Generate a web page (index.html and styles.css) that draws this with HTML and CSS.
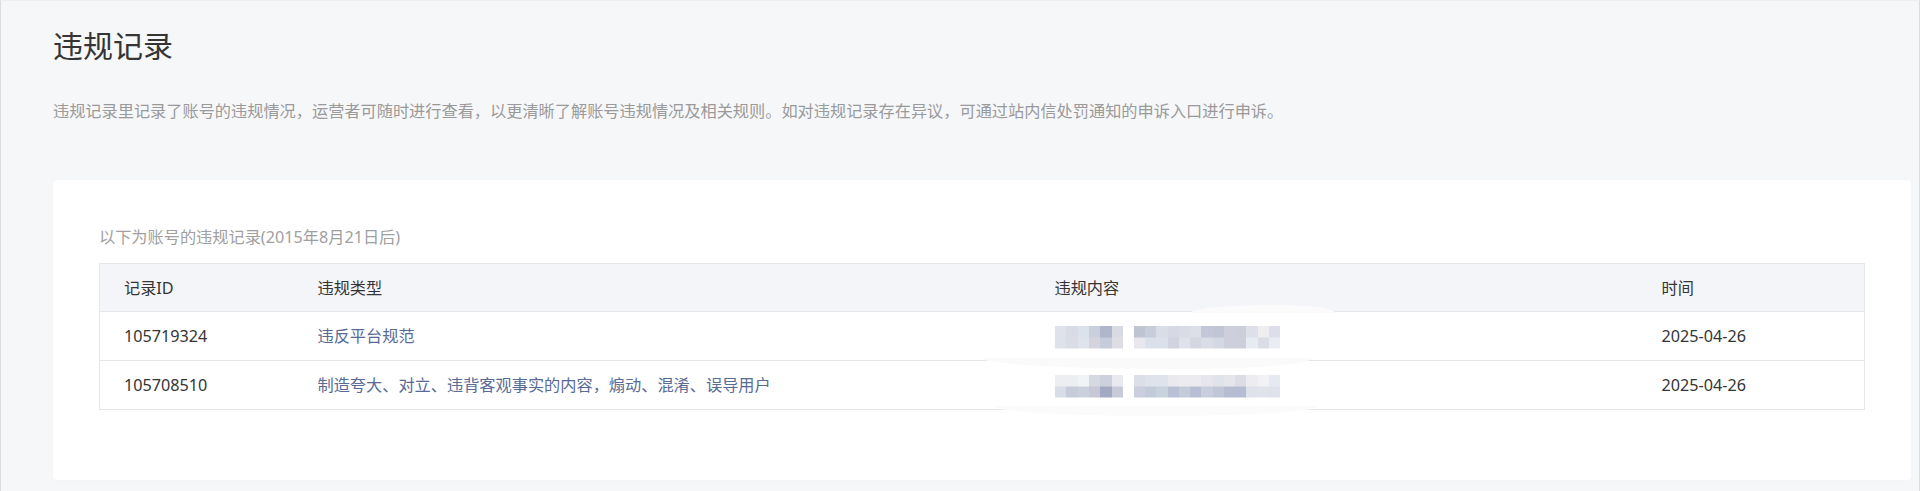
FILE: index.html
```html
<!DOCTYPE html>
<html lang="zh-CN">
<head>
<meta charset="utf-8">
<title>违规记录</title>
<link rel="stylesheet" href="styles.css">
</head>
<body>
<div class="page">
  <h1 class="title">违规记录</h1>
  <p class="desc">违规记录里记录了账号的违规情况，运营者可随时进行查看，以更清晰了解账号违规情况及相关规则。如对违规记录存在异议，可通过站内信处罚通知的申诉入口进行申诉。</p>
  <section class="card">
    <p class="subtitle">以下为账号的违规记录(2015年8月21日后)</p>
    <div class="table-wrap">
      <table class="records">
        <colgroup>
          <col class="c-id">
          <col class="c-type">
          <col class="c-content">
          <col class="c-time">
        </colgroup>
        <thead>
          <tr><th>记录ID</th><th>违规类型</th><th>违规内容</th><th>时间</th></tr>
        </thead>
        <tbody>
          <tr>
            <td>105719324</td>
            <td class="link">违反平台规范</td>
            <td><div class="mosaic"><span class="blk a1"></span><span class="blk b1"></span></div></td>
            <td>2025-04-26</td>
          </tr>
          <tr>
            <td>105708510</td>
            <td class="link">制造夸大、对立、违背客观事实的内容，煽动、混淆、误导用户</td>
            <td><div class="mosaic"><span class="blk a2"></span><span class="blk b2"></span></div></td>
            <td>2025-04-26</td>
          </tr>
        </tbody>
      </table>
      <span class="smear s1"></span>
      <span class="smear s2"></span>
      <span class="smear s3"></span>
    </div>
  </section>
</div>
</body>
</html>
```

FILE: styles.css
```css
html, body {
  margin: 0;
  padding: 0;
  background: #f6f7f9;
}

body {
  font-family: "Noto Sans", "Noto Sans CJK SC", sans-serif;
  color: #353535;
}

.page {
  height: 491px;
  box-sizing: border-box;
  border-left: 1px solid #dcdcdc;
  border-right: 1px solid #dcdcdc;
  border-top: 1px solid #efefef;
  padding: 25px 8px 0 52px;
  display: flex;
  flex-direction: column;
}

.title {
  margin: 0;
  font-size: 30px;
  line-height: 40px;
  font-weight: 400;
  color: #353535;
}

.desc {
  margin: 33px 0 0;
  font-size: 16.2px;
  line-height: 24px;
  color: #9a9a9a;
}

.card {
  margin-top: 57px;
  background: #fff;
  border-radius: 4px;
  box-shadow: 0 0 2px rgba(0, 0, 0, 0.04);
  padding: 45px 46px 70px 46px;
}

.subtitle {
  margin: 0 0 14px;
  font-size: 16.2px;
  line-height: 24px;
  color: #a0a0a0;
}

.table-wrap {
  position: relative;
}

.records {
  width: 100%;
  table-layout: fixed;
  border-collapse: collapse;
  border: 1px solid #e6e7eb;
  font-size: 16.2px;
}

.c-id { width: 194px; }
.c-type { width: 737px; }
.c-content { width: 607px; }
.c-time { width: auto; }

.records th,
.records td {
  text-align: left;
  font-weight: 400;
  padding: 0 0 0 24px;
  height: 47px;
  line-height: 24px;
  vertical-align: middle;
  white-space: nowrap;
}

.records thead th {
  background: #f4f5f9;
  color: #353535;
  border-bottom: 1px solid #e6e7eb;
}

.records tbody td {
  color: #353535;
  border-bottom: 1px solid #e6e7eb;
  height: 48px;
}

.records td.link {
  color: #576b95;
}

.mosaic {
  display: flex;
  gap: 11px;
  margin-top: 2px;
}

.blk {
  display: block;
  height: 23px;
  background-size: 100% 50%;
  background-repeat: no-repeat;
  background-position: top, bottom;
}

.a1, .a2 { width: 68px; }
.b1, .b2 { width: 146px; }

.a1 {
  background-image:
    linear-gradient(90deg, #dfe2ea 0 16.67%, #d9dce6 16.67% 33.33%, #dce2eb 33.33% 50%, #c9cfdc 50% 66.67%, #b0b7cc 66.67% 83.33%, #d9dbe3 83.33% 100%),
    linear-gradient(90deg, #dde1ea 0 16.67%, #dadde6 16.67% 33.33%, #dfe3ec 33.33% 50%, #d4d3de 50% 66.67%, #c6ccd9 66.67% 83.33%, #dfdde4 83.33% 100%);
}

.b1 {
  background-image:
    linear-gradient(90deg, #bfc4d3 0 7.69%, #c8cddc 7.69% 15.38%, #d8dee8 15.38% 23.08%, #d6d9e3 23.08% 30.77%, #d9dce6 30.77% 38.46%, #dcdfe8 38.46% 46.15%, #c3c7d7 46.15% 53.85%, #c1c5d6 53.85% 61.54%, #cdd0dc 61.54% 69.23%, #ccced9 69.23% 76.92%, #dde0e9 76.92% 84.62%, #eeeef1 84.62% 92.31%, #dcdfea 92.31% 100%),
    linear-gradient(90deg, #e8e7ed 0 7.69%, #dbe1ea 7.69% 15.38%, #dbe1ea 15.38% 23.08%, #d1d4e0 23.08% 30.77%, #dfe2ea 30.77% 38.46%, #d4d7e2 38.46% 46.15%, #dadde6 46.15% 53.85%, #d4d8e2 53.85% 61.54%, #cdd0dc 61.54% 69.23%, #cdd0dc 69.23% 76.92%, #e7ebf2 76.92% 84.62%, #dadde6 84.62% 92.31%, #e9ecf2 92.31% 100%);
}

.a2 {
  background-image:
    linear-gradient(90deg, #eceef2 0 16.67%, #eceef2 16.67% 33.33%, #f1f4f6 33.33% 50%, #d6d8e2 50% 66.67%, #cdd1dd 66.67% 83.33%, #e9eaef 83.33% 100%),
    linear-gradient(90deg, #d9dde6 0 16.67%, #c6ccd9 16.67% 33.33%, #cad1dc 33.33% 50%, #c6c8d6 50% 66.67%, #a3a9c2 66.67% 83.33%, #c9cad8 83.33% 100%);
}

.b2 {
  background-image:
    linear-gradient(90deg, #dcdfe7 0 7.69%, #dfe4ec 7.69% 15.38%, #dde4ec 15.38% 23.08%, #e9e9ee 23.08% 30.77%, #ececf0 30.77% 38.46%, #ececf0 38.46% 46.15%, #e6e6ec 46.15% 53.85%, #e1e3ea 53.85% 61.54%, #e5e6ec 61.54% 69.23%, #dcdce5 69.23% 76.92%, #ececf1 76.92% 84.62%, #f2f2f4 84.62% 92.31%, #e5e9f1 92.31% 100%),
    linear-gradient(90deg, #cbcfdd 0 7.69%, #c3cbdb 7.69% 15.38%, #c8d3de 15.38% 23.08%, #b9bfd4 23.08% 30.77%, #c5cbd8 30.77% 38.46%, #b8bfd4 38.46% 46.15%, #c8cedb 46.15% 53.85%, #c1c7d7 53.85% 61.54%, #b7bdd0 61.54% 69.23%, #b6bcd3 69.23% 76.92%, #dde2eb 76.92% 84.62%, #e1e3ea 84.62% 92.31%, #dfe2ea 92.31% 100%);
}

.smear {
  position: absolute;
  display: block;
  pointer-events: none;
}

.s1 {
  left: 1091px;
  top: 42px;
  width: 145px;
  height: 8px;
  background: #fbfbfc;
  border-radius: 60% 40% 0 0 / 100% 100% 0 0;
}

.s2 {
  left: 883px;
  top: 95px;
  width: 330px;
  height: 11px;
  background: #fafafa;
  border-radius: 0 0 40% 60% / 0 0 100% 100%;
}

.s3 {
  left: 894px;
  top: 143px;
  width: 326px;
  height: 10px;
  background: #fbfbfb;
  border-radius: 0 0 50% 50% / 0 0 100% 100%;
}
```
